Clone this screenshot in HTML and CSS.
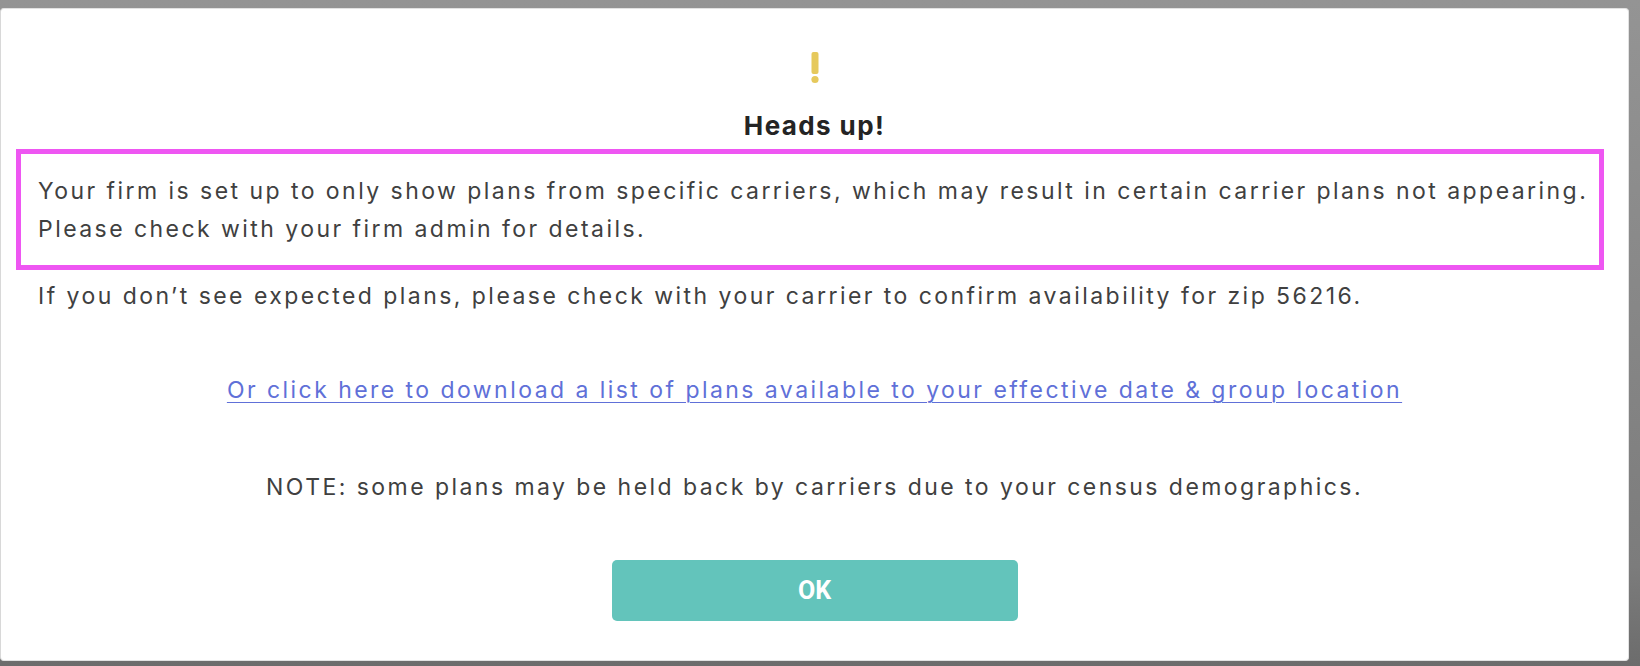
FILE: index.html
```html
<!DOCTYPE html>
<html lang="en-us">
  <head>
    <meta charset="utf-8">
    <meta name="viewport" content="width=device-width, initial-scale=1.0">
    <title>Heads up!</title>
    <link rel="stylesheet" href="styles.css">
  </head>

  <body>
    <section id=overlay>
      <div class="modal">
        <div class="modal-icon">
          <svg width="8" height="32" viewBox="0 0 8 32">
            <rect x="0.5" y="0" width="7" height="22" rx="2" fill="#e6c95c"/>
            <circle cx="4" cy="27.5" r="3.6" fill="#e6c95c"/>
          </svg>
        </div>

        <h2 class="modal-title">Heads up!</h2>

        <p class="notice">
          Your firm is set up to only show plans from specific carriers, which may result in certain carrier plans not appearing.<br>
          Please check with your firm admin for details.
        </p>

        <p class="plain">If you don’t see expected plans, please check with your carrier to confirm availability for zip 56216.</p>

        <p class="centered"><a href="#">Or click here to download a list of plans available to your effective date &amp; group location</a></p>

        <p class="centered">NOTE: some plans may be held back by carriers due to your census demographics.</p>

        <div class="actions">
          <button class="btn-ok">OK</button>
        </div>
      </div>
    </section>
  </body>
</html>
```

FILE: styles.css
```css
* {
  margin:0;
  padding:0;
  box-sizing:border-box;
}

html, body {
  height:100%;
}

body {
  font-family:'Inter', 'Open Sans', sans-serif;
  font-size:23px;
  line-height:38px;
  letter-spacing:2.45px;
  color:#404040;
  background:linear-gradient(#949494, #7c7c7c 85%, #6c6c6c);
}

#overlay {
  padding:8px 11px 5px 0;
}

.modal {
  background:#fff;
  border:1px solid #e2e2e2;
  border-left-color:#d8d8d8;
  border-radius:4px;
  height:653px;
  padding:43px 0 0;
  display:flex;
  flex-direction:column;
}

.modal-icon {
  display:flex;
  justify-content:center;
  height:32px;
}

.modal-title {
  font-size:26px;
  line-height:32px;
  font-weight:700;
  letter-spacing:1.4px;
  color:#242424;
  text-align:center;
  margin-top:26px;
}

.notice {
  margin:7px 24px 0 15px;
  border:5px solid #ee56f2;
  padding:18px 0 17px 17px;
  white-space:nowrap;
}

.plain {
  margin:7px 0 0 37px;
}

.centered {
  text-align:center;
  margin-top:56px;
}

.centered + .centered {
  margin-top:59px;
}

.centered a {
  color:#6070d8;
  text-decoration:underline;
  text-underline-offset:4px;
  text-decoration-thickness:1px;
}

.actions {
  display:flex;
  justify-content:center;
  margin-top:54px;
}

.btn-ok {
  width:406px;
  height:61px;
  background:#63c4bb;
  border-radius:5px;
  border:0;
  color:#fff;
  font-family:'Roboto', sans-serif;
  font-weight:700;
  font-size:25px;
  letter-spacing:0;
}
```
